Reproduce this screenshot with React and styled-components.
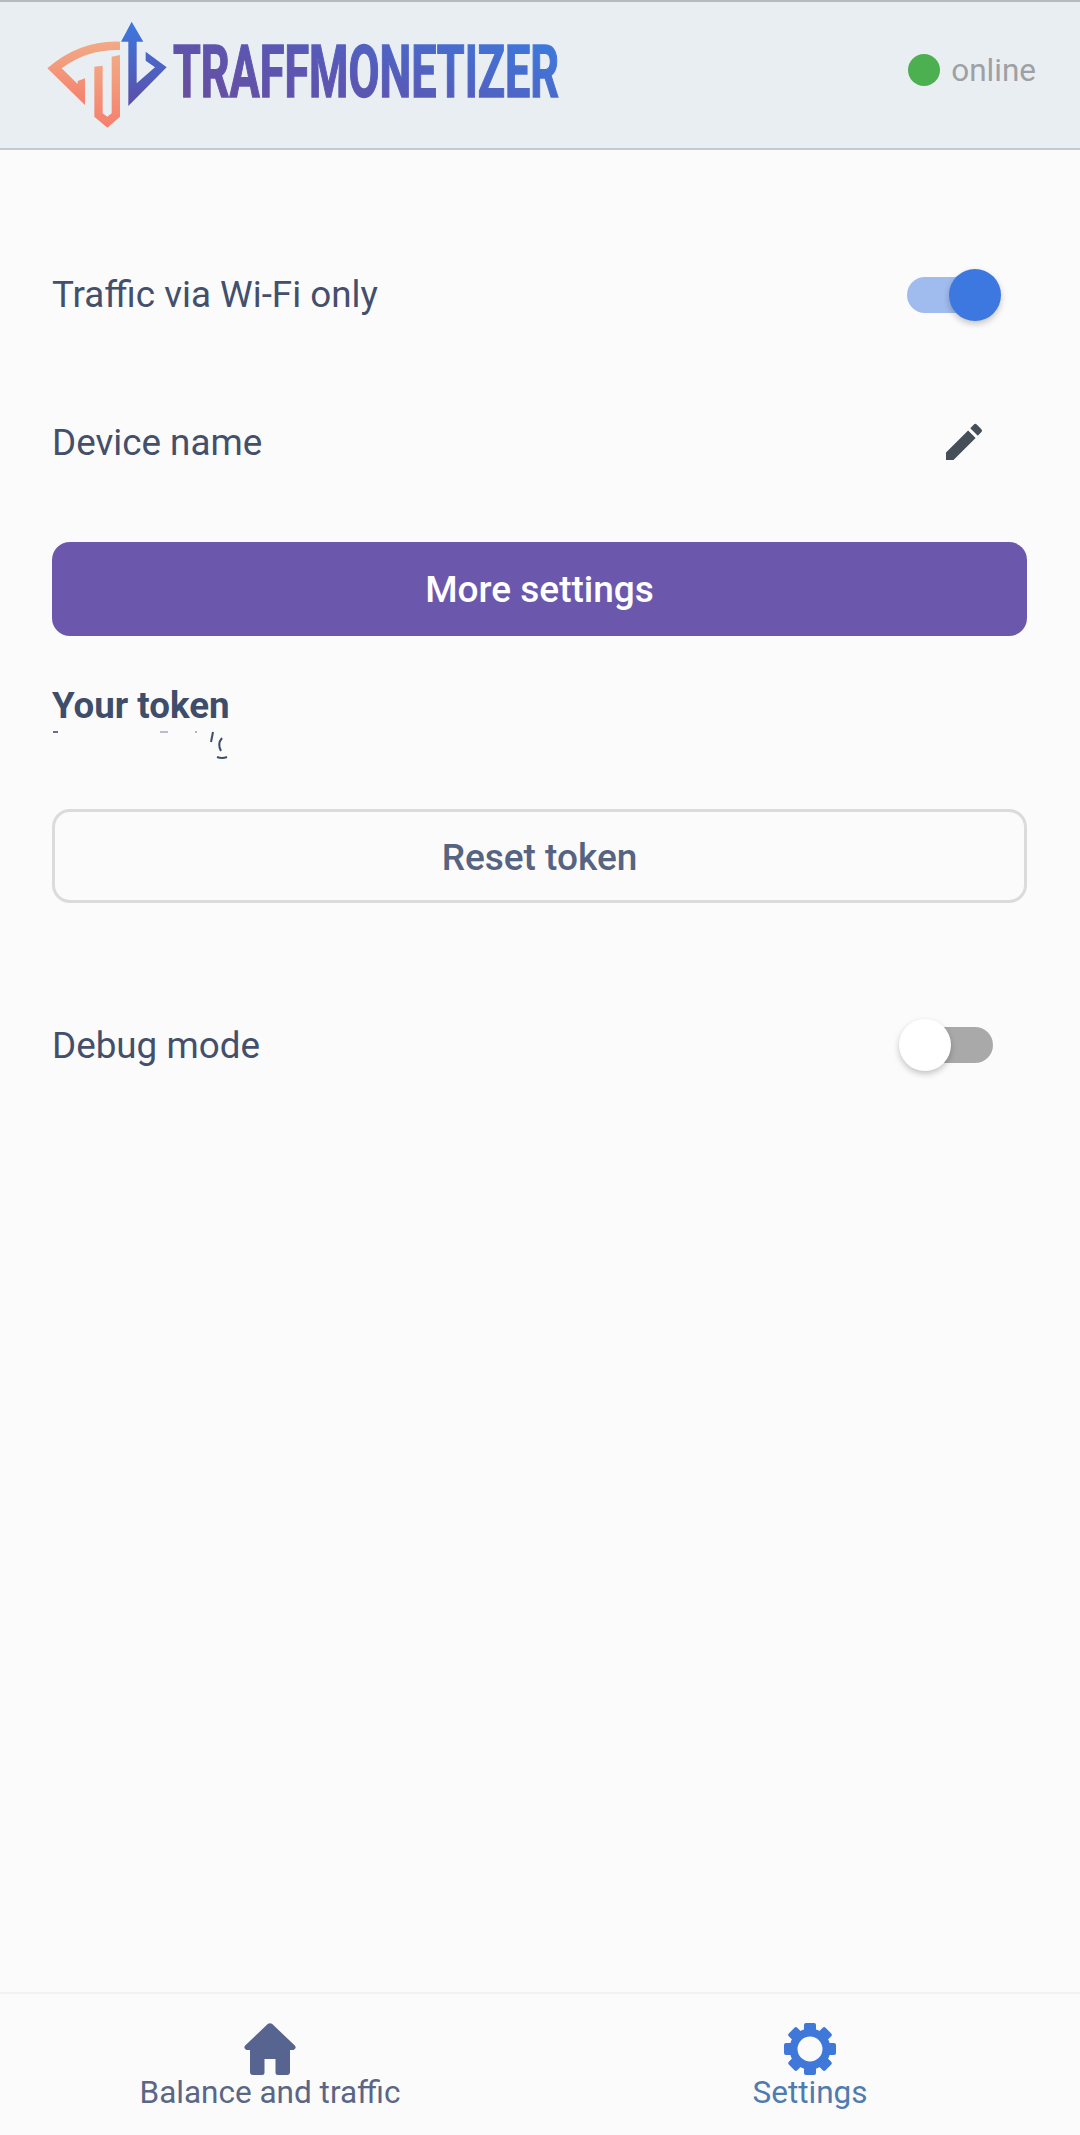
import styled, { createGlobalStyle } from 'styled-components';
import { MdEdit } from 'react-icons/md';

const GlobalStyle = createGlobalStyle`
  html, body {
    margin: 0;
    padding: 0;
    background: #fbfbfb;
  }
  * {
    box-sizing: border-box;
  }
`;

const Page = styled.div`
  min-height: 100vh;
  display: flex;
  flex-direction: column;
  font-family: Roboto, "Liberation Sans", sans-serif;
  color: #434f6b;
`;

const Header = styled.header`
  height: 150px;
  flex: none;
  display: flex;
  align-items: center;
  justify-content: space-between;
  padding: 0 44px 5px 30px;
  background: #e9eef2;
  border-top: 2px solid #b4bcc2;
  border-bottom: 2px solid #c6cacd;
`;

const LogoWrap = styled.div`
  display: flex;
  align-items: center;
`;

const Wordmark = styled.div`
  width: 385px;
  margin-left: -7px;
  flex: none;
`;

const WordmarkText = styled.span`
  display: inline-block;
  font-size: 72px;
  font-weight: 700;
  line-height: 72px;
  white-space: nowrap;
  transform: scaleX(0.624);
  transform-origin: left center;
  background: linear-gradient(15deg, #6a4c9c 0%, #5a57b4 45%, #3a7ce0 100%);
  -webkit-background-clip: text;
  background-clip: text;
  color: transparent;
  -webkit-text-stroke: 1.5px transparent;
`;

const Status = styled.div`
  display: flex;
  align-items: center;
  gap: 11px;
  margin-bottom: 5px;
  font-size: 31.5px;
  color: #9ea0a4;
`;

const Dot = styled.span`
  width: 32px;
  height: 32px;
  border-radius: 50%;
  background: #4caf50;
`;

const Content = styled.main`
  flex: 1;
  padding: 71px 53px 0 52px;
`;

const Row = styled.div`
  height: 147px;
  display: flex;
  align-items: center;
  justify-content: space-between;
  font-size: 36.8px;
`;

const RowLabel = styled.span`
  padding-top: ${(p) => (p.$nudge ? '1px' : '0')};
`;

const SwitchTrack = styled.div`
  position: relative;
  width: 84px;
  height: 36px;
  border-radius: 18px;
  margin-right: ${(p) => (p.$on ? '36px' : '34px')};
  background: ${(p) => (p.$on ? '#a0bbee' : '#a9a9a9')};
`;

const SwitchThumb = styled.span`
  position: absolute;
  top: -8px;
  ${(p) => (p.$on ? 'right: -10px;' : 'left: -10px;')}
  width: 52px;
  height: 52px;
  border-radius: 50%;
  background: ${(p) => (p.$on ? '#3d78e0' : '#ffffff')};
  box-shadow: 0 3px 6px rgba(0, 0, 0, 0.22);
`;

const EditButton = styled.div`
  display: flex;
  margin-right: 39px;
  color: #454f59;
  font-size: 48px;
`;

const PrimaryButton = styled.button`
  display: block;
  width: 100%;
  height: 94px;
  margin-top: 27px;
  border: none;
  border-radius: 18px;
  background: #6b58ad;
  color: #ffffff;
  font: 500 37px Roboto, sans-serif;
`;

const TokenBlock = styled.div`
  margin-top: 49px;
`;

const TokenTitle = styled.div`
  font-size: 36.7px;
  font-weight: 700;
  line-height: 42px;
  color: #3e4d69;
`;

const TokenMarks = styled.svg`
  display: block;
  width: 180px;
  height: 30px;
  margin-top: 3px;
`;

const OutlineButton = styled.button`
  display: block;
  width: 100%;
  height: 94px;
  margin-top: 49px;
  padding-top: 3px;
  border: 3px solid #d9dbdc;
  border-radius: 18px;
  background: transparent;
  color: #566482;
  font: 500 37px Roboto, sans-serif;
`;

const DebugRow = styled(Row)`
  margin-top: 68px;
`;

const BottomNav = styled.nav`
  height: 143px;
  flex: none;
  display: grid;
  grid-template-columns: 1fr 1fr;
  padding-top: 29px;
  border-top: 2px solid #f2f2f2;
`;

const NavItem = styled.div`
  display: flex;
  flex-direction: column;
  align-items: center;
  font-size: 31.5px;
  line-height: 36px;
  color: ${(p) => (p.$active ? '#4f7bb0' : '#5a6685')};
`;

const NavIcon = styled.svg`
  display: block;
  width: 52px;
  height: 52px;
`;

function LogoMark() {
  return (
    <svg width="150" height="125" viewBox="0 0 450 375">
      <defs>
        <linearGradient id="warm" x1="0" y1="0" x2="0" y2="1">
          <stop offset="0" stopColor="#f2aa86" />
          <stop offset="1" stopColor="#f5806d" />
        </linearGradient>
        <linearGradient id="cool" x1="0" y1="0" x2="0" y2="1">
          <stop offset="0" stopColor="#3d78e0" />
          <stop offset="1" stopColor="#5a4fa8" />
        </linearGradient>
      </defs>
      <path
        fill="url(#warm)"
        d="M270 95 Q150 90 52 175 L165 285 V205 L143 213 V222 L95 175 Q170 118 270 120 Z"
      />
      <path
        fill="url(#warm)"
        d="M193 170 L218 167 V310 L232 320 L245 310 V140 L270 135 V320 L232 353 L193 320 Z"
      />
      <path
        fill="url(#cool)"
        d="M305 35 L340 95 H320 V220 L375 172 L347 152 V125 L410 172 L295 288 V95 H273 Z"
      />
    </svg>
  );
}

function Gear() {
  return (
    <NavIcon viewBox="0 0 52 52" fill="#3f78d8">
      <circle cx="26" cy="26" r="16.5" fill="none" stroke="#3f78d8" strokeWidth="8" />
      {[0, 45, 90, 135, 180, 225, 270, 315].map((a) => (
        <rect key={a} x="20" y="0" width="12" height="10" rx="2" transform={`rotate(${a} 26 26)`} />
      ))}
    </NavIcon>
  );
}

export default function App() {
  return (
    <Page>
      <GlobalStyle />
      <Header>
        <LogoWrap>
          <LogoMark />
          <Wordmark>
            <WordmarkText>TRAFFMONETIZER</WordmarkText>
          </Wordmark>
        </LogoWrap>
        <Status>
          <Dot />
          online
        </Status>
      </Header>
      <Content>
        <Row>
          <RowLabel>Traffic via Wi-Fi only</RowLabel>
          <SwitchTrack $on>
            <SwitchThumb $on />
          </SwitchTrack>
        </Row>
        <Row>
          <RowLabel $nudge>Device name</RowLabel>
          <EditButton>
            <MdEdit />
          </EditButton>
        </Row>
        <PrimaryButton>More settings</PrimaryButton>
        <TokenBlock>
          <TokenTitle>Your token</TokenTitle>
          <TokenMarks viewBox="0 0 180 30" fill="none" stroke="#3e4d69" strokeWidth="2">
            <path d="M1 2 H6" opacity="0.8" />
            <path d="M108 2 H116" opacity="0.35" />
            <path d="M143 2 H145" opacity="0.4" />
            <path d="M161 2 L159 12" />
            <path d="M170 8 Q165 14 169 21" />
            <path d="M165 27 Q170 29 175 27" />
          </TokenMarks>
        </TokenBlock>
        <OutlineButton>Reset token</OutlineButton>
        <DebugRow>
          <RowLabel $nudge>Debug mode</RowLabel>
          <SwitchTrack>
            <SwitchThumb />
          </SwitchTrack>
        </DebugRow>
      </Content>
      <BottomNav>
        <NavItem>
          <NavIcon viewBox="0 0 52 52" fill="#56648f">
            <path d="M24 .8 Q26 -.4 28 .8 L50.8 22.5 Q53 25.5 49.5 27 L46 27 V49 Q46 52 43 52 H34 Q31.5 52 31.5 49.5 V36 H20.5 V49.5 Q20.5 52 18 52 H9 Q6 52 6 49 V27 H2.5 Q-1 25.5 1.2 22.5 Z" />
          </NavIcon>
          Balance and traffic
        </NavItem>
        <NavItem $active>
          <Gear />
          Settings
        </NavItem>
      </BottomNav>
    </Page>
  );
}
